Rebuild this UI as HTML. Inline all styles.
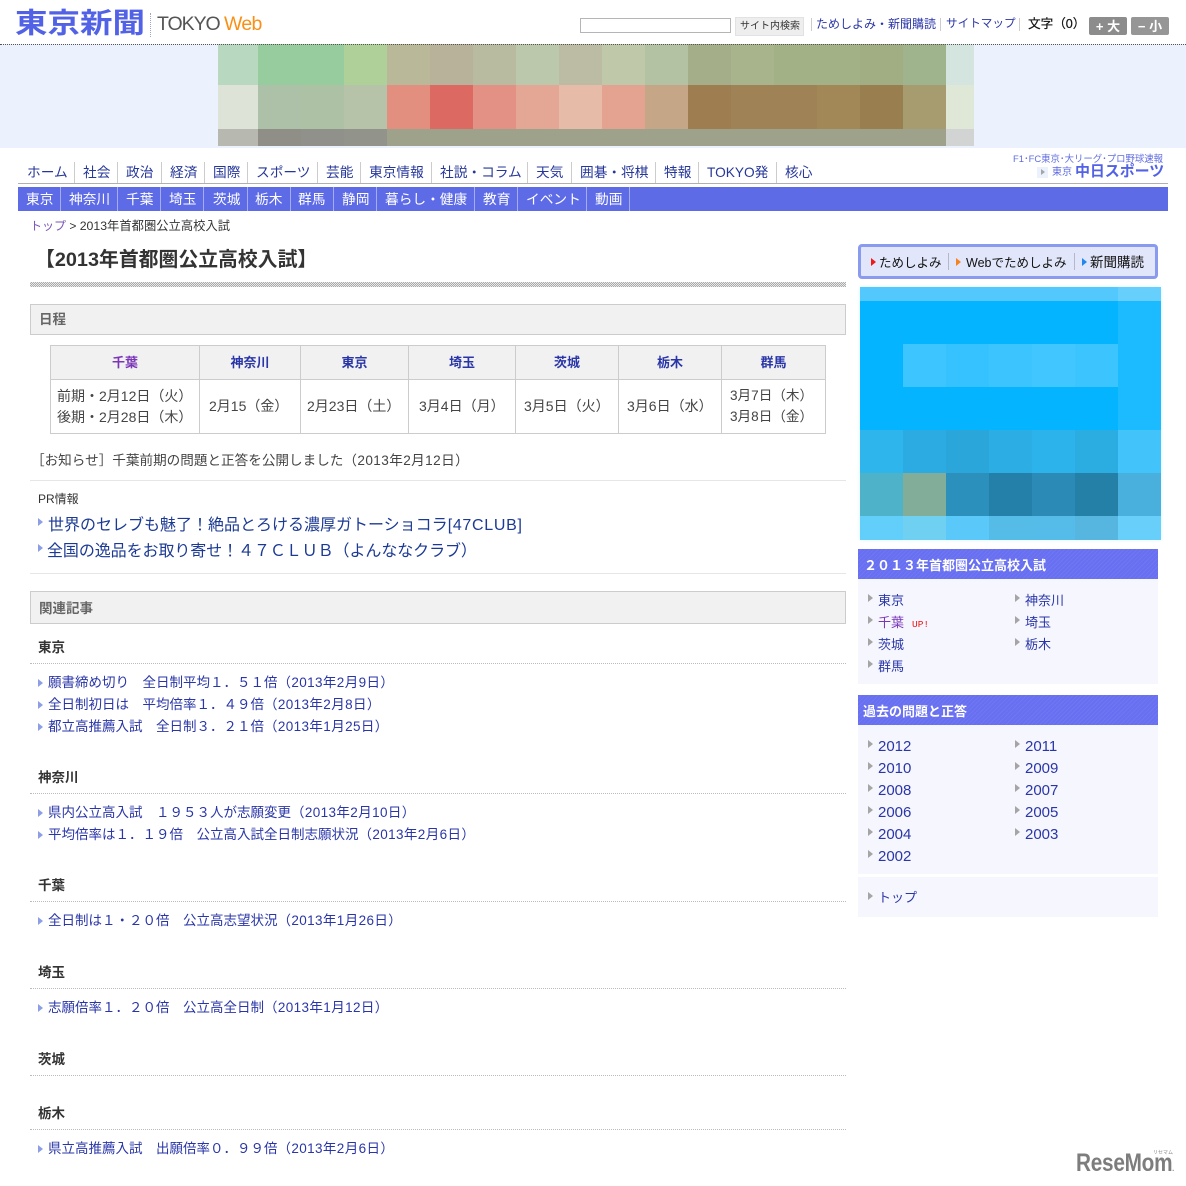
<!DOCTYPE html>
<html lang="ja"><head><meta charset="utf-8"><title>2013年首都圏公立高校入試</title>
<style>
html,body{margin:0;padding:0;background:#fff}
body{position:relative;width:1186px;height:1186px;overflow:hidden;font-family:"Liberation Sans","Noto Sans CJK JP",sans-serif;color:#333}
.t{position:absolute;white-space:nowrap;line-height:20px;height:20px}
.b{position:absolute}
.n{font-size:13.7px;color:#26379a}
.s{font-size:13.7px;color:#fff}
.v{position:absolute;width:1px;background:#ccc}
.vw{position:absolute;width:1px;background:#a5acf2;top:187px;height:24px}
.m{font-size:13.5px;color:#2a36a8}
.q{letter-spacing:.38px}
.h{font-size:13.5px;font-weight:bold;color:#333}
.th{font-size:13px;font-weight:bold;color:#2a36a8;text-align:center}
.c{font-size:14px;color:#444}
.a{position:absolute;width:0;height:0;border-left:5px solid #8c9fe6;border-top:4.5px solid transparent;border-bottom:4.5px solid transparent}
.g{position:absolute;width:0;height:0;border-left:5px solid #a5a5a5;border-top:4.5px solid transparent;border-bottom:4.5px solid transparent}
.d{position:absolute;left:30px;width:816px;height:0;border-top:1px dotted #bbb}
.sd{font-size:13px;color:#2a36a8}
.y{font-size:15px;color:#2a36a8}
.sh{position:absolute;left:858px;width:300px;height:30px;background:#686ff0;background-image:repeating-linear-gradient(135deg,#686ff0 0,#686ff0 2px,#7077f2 2px,#7077f2 3px)}
.sb{position:absolute;left:858px;width:300px;background:#f5f6fe}
.box{position:absolute;left:30px;width:814px;background:#f1f1f1;border:1px solid #ccc}
.l{position:absolute;background:#ccc}
</style></head><body>

<div class="t" style="left:15px;top:4px;font-size:32.5px;line-height:38px;height:38px;font-weight:bold;color:#5262e6;transform:scaleY(.86);transform-origin:0 50%">東京新聞</div>
<div class="b" style="left:150px;top:13px;height:24px;border-left:1px dotted #9aa6c8"></div>
<div class="t" style="left:157px;top:14px;font-size:19.5px;color:#555;letter-spacing:-1.05px">TOKYO <span style="color:#f98f14;letter-spacing:-.7px">Web</span></div>

<div class="b" style="left:580px;top:18px;width:149px;height:13px;border:1px solid #b5b5b5;background:#fff"></div>
<div class="b" style="left:735px;top:17px;width:67px;height:17px;background:#eee;border:1px solid #e2e2e2"></div>
<div class="t" style="left:740px;top:17px;font-size:10px;color:#333">サイト内検索</div>
<div class="v" style="left:811px;top:18px;height:13px"></div>
<div class="t" style="left:816px;top:14px;font-size:12px;color:#2a36a8">ためしよみ・新聞購読</div>
<div class="v" style="left:940px;top:18px;height:13px"></div>
<div class="t" style="left:946px;top:14px;font-size:11.6px;color:#2a36a8">サイトマップ</div>
<div class="v" style="left:1019px;top:18px;height:13px"></div>
<div class="t" style="left:1028px;top:14px;font-size:12.6px;color:#111;-webkit-text-stroke:.2px #111">文字（0）</div>
<div class="b" style="left:1089px;top:17px;width:38px;height:18px;background:#8c8c8c;border-radius:2px;color:#fff;font-size:13px;font-weight:bold;line-height:19px;text-align:center">+ 大</div>
<div class="b" style="left:1131px;top:17px;width:38px;height:18px;background:#969696;border-radius:2px;color:#fff;font-size:13px;font-weight:bold;line-height:19px;text-align:center">− 小</div>

<div class="b" style="left:0;top:44px;width:1186px;height:104px;background:#ecf1fe"></div>
<div class="b" style="left:0;top:44px;width:1186px;height:0;border-top:1px dotted #555;z-index:3"></div>
<svg class="b" style="left:218px;top:44px" width="756" height="102" shape-rendering="crispEdges">
<g>
<rect x="0" y="0" width="40" height="41" fill="#b8d9c0"/><rect x="40" y="0" width="43" height="41" fill="#96cc9e"/><rect x="83" y="0" width="43" height="41" fill="#96cc9e"/><rect x="126" y="0" width="43" height="41" fill="#afd098"/><rect x="169" y="0" width="43" height="41" fill="#b9b898"/><rect x="212" y="0" width="43" height="41" fill="#b9b29a"/><rect x="255" y="0" width="43" height="41" fill="#b8bba0"/><rect x="298" y="0" width="43" height="41" fill="#bbc8ac"/><rect x="341" y="0" width="43" height="41" fill="#bcbca4"/><rect x="384" y="0" width="43" height="41" fill="#bfc8a9"/><rect x="427" y="0" width="43" height="41" fill="#b2c2a2"/><rect x="470" y="0" width="43" height="41" fill="#a4ae88"/><rect x="513" y="0" width="43" height="41" fill="#a7b48c"/><rect x="556" y="0" width="43" height="41" fill="#a3b187"/><rect x="599" y="0" width="43" height="41" fill="#a3b187"/><rect x="642" y="0" width="43" height="41" fill="#a1ad82"/><rect x="685" y="0" width="43" height="41" fill="#9fb48c"/><rect x="728" y="0" width="28" height="41" fill="#d4e4de"/>
</g>
<g>
<rect x="0" y="41" width="40" height="44" fill="#dde3d6"/><rect x="40" y="41" width="43" height="44" fill="#adc1a9"/><rect x="83" y="41" width="43" height="44" fill="#adc1a5"/><rect x="126" y="41" width="43" height="44" fill="#b6c3a8"/><rect x="169" y="41" width="43" height="44" fill="#e28f80"/><rect x="212" y="41" width="43" height="44" fill="#dc6a62"/><rect x="255" y="41" width="43" height="44" fill="#e39184"/><rect x="298" y="41" width="43" height="44" fill="#e4a695"/><rect x="341" y="41" width="43" height="44" fill="#e6bca9"/><rect x="384" y="41" width="43" height="44" fill="#e4a390"/><rect x="427" y="41" width="43" height="44" fill="#c5a687"/><rect x="470" y="41" width="43" height="44" fill="#9e7d50"/><rect x="513" y="41" width="43" height="44" fill="#9f8255"/><rect x="556" y="41" width="43" height="44" fill="#9f8255"/><rect x="599" y="41" width="43" height="44" fill="#a28757"/><rect x="642" y="41" width="43" height="44" fill="#997f50"/><rect x="685" y="41" width="43" height="44" fill="#a79b70"/><rect x="728" y="41" width="28" height="44" fill="#dfe7d6"/>
</g>
<g>
<rect x="0" y="85" width="40" height="17" fill="#b7b9b0"/><rect x="40" y="85" width="43" height="17" fill="#8f8f88"/><rect x="83" y="85" width="43" height="17" fill="#90918a"/><rect x="126" y="85" width="43" height="17" fill="#92938a"/><rect x="169" y="85" width="559" height="17" fill="#9fa28b"/><rect x="728" y="85" width="28" height="17" fill="#d2d3d3"/>
</g>
</svg>

<div class="t n" style="left:27px;top:163px">ホーム</div>
<div class="v" style="left:74px;top:162px;height:21px"></div>
<div class="t n" style="left:83px;top:163px">社会</div>
<div class="v" style="left:117px;top:162px;height:21px"></div>
<div class="t n" style="left:126px;top:163px">政治</div>
<div class="v" style="left:161px;top:162px;height:21px"></div>
<div class="t n" style="left:170px;top:163px">経済</div>
<div class="v" style="left:204px;top:162px;height:21px"></div>
<div class="t n" style="left:213px;top:163px">国際</div>
<div class="v" style="left:247px;top:162px;height:21px"></div>
<div class="t n" style="left:256px;top:163px">スポーツ</div>
<div class="v" style="left:317px;top:162px;height:21px"></div>
<div class="t n" style="left:326px;top:163px">芸能</div>
<div class="v" style="left:360px;top:162px;height:21px"></div>
<div class="t n" style="left:369px;top:163px">東京情報</div>
<div class="v" style="left:431px;top:162px;height:21px"></div>
<div class="t n" style="left:440px;top:163px">社説・コラム</div>
<div class="v" style="left:527px;top:162px;height:21px"></div>
<div class="t n" style="left:536px;top:163px">天気</div>
<div class="v" style="left:571px;top:162px;height:21px"></div>
<div class="t n" style="left:580px;top:163px">囲碁・将棋</div>
<div class="v" style="left:655px;top:162px;height:21px"></div>
<div class="t n" style="left:664px;top:163px">特報</div>
<div class="v" style="left:698px;top:162px;height:21px"></div>
<div class="t n" style="left:707px;top:163px">TOKYO発</div>
<div class="v" style="left:776px;top:162px;height:21px"></div>
<div class="t n" style="left:785px;top:163px">核心</div>

<div class="t" style="left:1013px;top:149px;font-size:9.4px;color:#5f6ce0">F1･FC東京･大リーグ･プロ野球速報</div>
<div class="b" style="left:1037px;top:167px;width:11px;height:11px;background:#ecf1fe"></div>
<div class="g" style="left:1041px;top:169px;border-left-width:4px;border-top-width:3.5px;border-bottom-width:3.5px"></div>
<div class="t" style="left:1052px;top:163px;font-size:10px;color:#5f6ce0">東京</div>
<div class="t" style="left:1075px;top:162px;font-size:15px;font-weight:bold;color:#5262e6;letter-spacing:-.1px">中日スポーツ</div>

<div class="b" style="left:18px;top:183px;width:1150px;height:1px;background:#b0b0b0"></div>
<div class="b" style="left:18px;top:187px;width:1150px;height:24px;background:#5e6be6"></div>
<div class="t s" style="left:26px;top:190px">東京</div><div class="vw" style="left:60px"></div>
<div class="t s" style="left:69px;top:190px">神奈川</div><div class="vw" style="left:117px"></div>
<div class="t s" style="left:126px;top:190px">千葉</div><div class="vw" style="left:160px"></div>
<div class="t s" style="left:169px;top:190px">埼玉</div><div class="vw" style="left:203px"></div>
<div class="t s" style="left:213px;top:190px">茨城</div><div class="vw" style="left:247px"></div>
<div class="t s" style="left:255px;top:190px">栃木</div><div class="vw" style="left:290px"></div>
<div class="t s" style="left:298px;top:190px">群馬</div><div class="vw" style="left:333px"></div>
<div class="t s" style="left:342px;top:190px">静岡</div><div class="vw" style="left:376px"></div>
<div class="t s" style="left:385px;top:190px">暮らし・健康</div><div class="vw" style="left:474px"></div>
<div class="t s" style="left:483px;top:190px">教育</div><div class="vw" style="left:517px"></div>
<div class="t s" style="left:526px;top:190px">イベント</div><div class="vw" style="left:586px"></div>
<div class="t s" style="left:595px;top:190px">動画</div><div class="vw" style="left:629px"></div>

<div class="t" style="left:30px;top:216px;font-size:12px;color:#333"><span style="color:#7a55b8">トップ</span> &gt; <span style="font-size:12.3px">2013年首都圏公立高校入試</span></div>

<div class="t" style="left:35px;top:250px;font-size:19.85px;font-weight:bold;color:#333">【2013年首都圏公立高校入試】</div>
<div class="b" style="left:30px;top:282px;width:816px;height:5px;background:repeating-conic-gradient(#aaa 0 25%,#e8e8e8 0 50%) 0 0/2px 2px"></div>

<div class="box" style="top:304px;height:29px"></div>
<div class="t" style="left:39px;top:310px;font-size:13.5px;font-weight:bold;color:#666">日程</div>

<div class="b" style="left:51px;top:346px;width:774px;height:33px;background:#f1f1f1"></div>
<div class="l" style="left:50px;top:345px;width:776px;height:1px"></div>
<div class="l" style="left:50px;top:379px;width:776px;height:1px"></div>
<div class="l" style="left:50px;top:433px;width:776px;height:1px"></div>
<div class="l" style="left:50px;top:345px;width:1px;height:89px"></div>
<div class="l" style="left:199px;top:345px;width:1px;height:89px"></div>
<div class="l" style="left:300px;top:345px;width:1px;height:89px"></div>
<div class="l" style="left:408px;top:345px;width:1px;height:89px"></div>
<div class="l" style="left:515px;top:345px;width:1px;height:89px"></div>
<div class="l" style="left:618px;top:345px;width:1px;height:89px"></div>
<div class="l" style="left:721px;top:345px;width:1px;height:89px"></div>
<div class="l" style="left:825px;top:345px;width:1px;height:89px"></div>
<div class="t th" style="left:51px;width:148px;top:353px;color:#7a35b8">千葉</div>
<div class="t th" style="left:200px;width:100px;top:353px">神奈川</div>
<div class="t th" style="left:301px;width:107px;top:353px">東京</div>
<div class="t th" style="left:409px;width:106px;top:353px">埼玉</div>
<div class="t th" style="left:516px;width:102px;top:353px">茨城</div>
<div class="t th" style="left:619px;width:102px;top:353px">栃木</div>
<div class="t th" style="left:722px;width:103px;top:353px">群馬</div>
<div class="t c" style="left:57px;top:386px">前期・2月12日（火）</div>
<div class="t c" style="left:57px;top:407px">後期・2月28日（木）</div>
<div class="t c" style="left:209px;top:396px">2月15（金）</div>
<div class="t c" style="left:307px;top:396px">2月23日（土）</div>
<div class="t c" style="left:419px;top:396px">3月4日（月）</div>
<div class="t c" style="left:524px;top:396px">3月5日（火）</div>
<div class="t c" style="left:627px;top:396px">3月6日（水）</div>
<div class="t c" style="left:730px;top:386px;font-size:13.6px">3月7日（木）</div>
<div class="t c" style="left:730px;top:407px;font-size:13.6px">3月8日（金）</div>

<div class="t" style="left:31px;top:451px;font-size:13.6px;color:#444">［お知らせ］千葉前期の問題と正答を公開しました<span style="letter-spacing:.4px">（2013年2月12日）</span></div>
<div class="l" style="left:30px;top:480px;width:816px;height:1px;background:#e6e6e6"></div>
<div class="t" style="left:38px;top:489px;font-size:12px;color:#333">PR情報</div>
<div class="a" style="left:38px;top:518px"></div>
<div class="t" style="left:48px;top:516px;font-size:16px;color:#1c3a94">世界のセレブも魅了！絶品とろける濃厚ガトーショコラ<span style="letter-spacing:.7px">[47CLUB]</span></div>
<div class="a" style="left:38px;top:544px"></div>
<div class="t" style="left:47px;top:542px;font-size:16px;color:#1c3a94;letter-spacing:-.08px">全国の逸品をお取り寄せ！４７ＣＬＵＢ（よんななクラブ）</div>
<div class="l" style="left:30px;top:573px;width:816px;height:1px;background:#e6e6e6"></div>

<div class="box" style="top:591px;height:31px"></div>
<div class="t" style="left:39px;top:599px;font-size:13.5px;font-weight:bold;color:#666">関連記事</div>

<div class="t h" style="left:38px;top:638px">東京</div>
<div class="d" style="top:663px"></div>
<div class="a" style="left:38px;top:679px"></div><div class="t m" style="left:48px;top:673px">願書締め切り　全日制平均１．５１倍<span class="q">（2013年2月9日）</span></div>
<div class="a" style="left:38px;top:701px"></div><div class="t m" style="left:48px;top:695px">全日制初日は　平均倍率１．４９倍<span class="q">（2013年2月8日）</span></div>
<div class="a" style="left:38px;top:723px"></div><div class="t m" style="left:48px;top:717px">都立高推薦入試　全日制３．２１倍<span class="q">（2013年1月25日）</span></div>

<div class="t h" style="left:38px;top:768px">神奈川</div>
<div class="d" style="top:793px"></div>
<div class="a" style="left:38px;top:809px"></div><div class="t m" style="left:48px;top:803px">県内公立高入試　１９５３人が志願変更<span class="q">（2013年2月10日）</span></div>
<div class="a" style="left:38px;top:831px"></div><div class="t m" style="left:48px;top:825px">平均倍率は１．１９倍　公立高入試全日制志願状況<span class="q">（2013年2月6日）</span></div>

<div class="t h" style="left:38px;top:876px">千葉</div>
<div class="d" style="top:901px"></div>
<div class="a" style="left:38px;top:917px"></div><div class="t m" style="left:48px;top:911px">全日制は１・２０倍　公立高志望状況<span class="q">（2013年1月26日）</span></div>

<div class="t h" style="left:38px;top:963px">埼玉</div>
<div class="d" style="top:988px"></div>
<div class="a" style="left:38px;top:1004px"></div><div class="t m" style="left:48px;top:998px">志願倍率１．２０倍　公立高全日制<span class="q">（2013年1月12日）</span></div>

<div class="t h" style="left:38px;top:1050px">茨城</div>
<div class="d" style="top:1075px"></div>

<div class="t h" style="left:38px;top:1104px">栃木</div>
<div class="d" style="top:1129px"></div>
<div class="a" style="left:38px;top:1145px"></div><div class="t m" style="left:48px;top:1139px">県立高推薦入試　出願倍率０．９９倍<span class="q">（2013年2月6日）</span></div>

<div class="b" style="left:858px;top:244px;width:294px;height:29px;border:3px solid #8a9bef;border-radius:4px;background:#e2e6fa"></div>
<div class="b" style="left:871px;top:258px;width:0;height:0;border-left:5px solid #f01818;border-top:4px solid transparent;border-bottom:4px solid transparent"></div>
<div class="t" style="left:879px;top:253px;font-size:12.5px;color:#111">ためしよみ</div>
<div class="b" style="left:948px;top:253px;width:1px;height:17px;background:#b5b8c8"></div>
<div class="b" style="left:956px;top:258px;width:0;height:0;border-left:5px solid #f58320;border-top:4px solid transparent;border-bottom:4px solid transparent"></div>
<div class="t" style="left:966px;top:253px;font-size:12.5px;color:#111">Webでためしよみ</div>
<div class="b" style="left:1074px;top:253px;width:1px;height:17px;background:#b5b8c8"></div>
<div class="b" style="left:1082px;top:258px;width:0;height:0;border-left:5px solid #2088f0;border-top:4px solid transparent;border-bottom:4px solid transparent"></div>
<div class="t" style="left:1090px;top:253px;font-size:13.5px;color:#111">新聞購読</div>

<svg class="b" style="left:860px;top:287px;box-shadow:0 0 4px #d8f3ff" width="301" height="253" shape-rendering="crispEdges">
<rect x="0" y="0" width="258" height="14" fill="#53c8fc"/><rect x="258" y="0" width="43" height="14" fill="#66cffc"/>
<rect x="0" y="14" width="258" height="43" fill="#05b4fe"/><rect x="258" y="14" width="43" height="43" fill="#1cbbff"/>
<rect x="0" y="57" width="43" height="43" fill="#05b4fe"/><rect x="43" y="57" width="43" height="43" fill="#3dc5ff"/><rect x="86" y="57" width="43" height="43" fill="#35c2fe"/><rect x="129" y="57" width="43" height="43" fill="#3cc4ff"/><rect x="172" y="57" width="43" height="43" fill="#42c6ff"/><rect x="215" y="57" width="43" height="43" fill="#3cc4ff"/><rect x="258" y="57" width="43" height="43" fill="#1cbbff"/>
<rect x="0" y="100" width="258" height="43" fill="#05b4fe"/><rect x="258" y="100" width="43" height="43" fill="#1cbbff"/>
<rect x="0" y="143" width="43" height="43" fill="#2db5ec"/><rect x="43" y="143" width="43" height="43" fill="#2babe2"/><rect x="86" y="143" width="43" height="43" fill="#2aa6da"/><rect x="129" y="143" width="43" height="43" fill="#2caee5"/><rect x="172" y="143" width="43" height="43" fill="#2db3eb"/><rect x="215" y="143" width="43" height="43" fill="#2bade2"/><rect x="258" y="143" width="43" height="43" fill="#42c4fb"/>
<rect x="0" y="186" width="43" height="43" fill="#4eb2c8"/><rect x="43" y="186" width="43" height="43" fill="#82ae99"/><rect x="86" y="186" width="43" height="43" fill="#2c90bc"/><rect x="129" y="186" width="43" height="43" fill="#2580a9"/><rect x="172" y="186" width="43" height="43" fill="#2c8bb6"/><rect x="215" y="186" width="43" height="43" fill="#2580a8"/><rect x="258" y="186" width="43" height="43" fill="#49b0dd"/>
<rect x="0" y="229" width="43" height="24" fill="#62cefa"/><rect x="43" y="229" width="43" height="24" fill="#70d0f2"/><rect x="86" y="229" width="43" height="24" fill="#5ac8f8"/><rect x="129" y="229" width="43" height="24" fill="#55bce8"/><rect x="172" y="229" width="43" height="24" fill="#55bbe8"/><rect x="215" y="229" width="43" height="24" fill="#56b6e0"/><rect x="258" y="229" width="43" height="24" fill="#68cefa"/>
</svg>

<div class="sb" style="top:579px;height:105px"></div>
<div class="sh" style="top:549px"></div>
<div class="t" style="left:864px;top:556px;font-size:13px;font-weight:bold;color:#fff">２０１３年首都圏公立高校入試</div>
<div class="g" style="left:868px;top:594px"></div><div class="t sd" style="left:878px;top:591px">東京</div>
<div class="g" style="left:1015px;top:594px"></div><div class="t sd" style="left:1025px;top:591px">神奈川</div>
<div class="g" style="left:868px;top:616px"></div><div class="t sd" style="left:878px;top:613px;color:#7a35b8">千葉</div>
<div class="t" style="left:912px;top:615px;font-size:9.5px;color:#ee1111;font-family:'Liberation Mono',monospace">UP!</div>
<div class="g" style="left:1015px;top:616px"></div><div class="t sd" style="left:1025px;top:613px">埼玉</div>
<div class="g" style="left:868px;top:638px"></div><div class="t sd" style="left:878px;top:635px">茨城</div>
<div class="g" style="left:1015px;top:638px"></div><div class="t sd" style="left:1025px;top:635px">栃木</div>
<div class="g" style="left:868px;top:660px"></div><div class="t sd" style="left:878px;top:657px">群馬</div>

<div class="sb" style="top:725px;height:149px"></div>
<div class="sh" style="top:695px"></div>
<div class="t" style="left:863px;top:702px;font-size:13px;font-weight:bold;color:#fff">過去の問題と正答</div>
<div class="g" style="left:868px;top:740px"></div><div class="t y" style="left:878px;top:737px">2012</div>
<div class="g" style="left:1015px;top:740px"></div><div class="t y" style="left:1025px;top:737px">2011</div>
<div class="g" style="left:868px;top:762px"></div><div class="t y" style="left:878px;top:759px">2010</div>
<div class="g" style="left:1015px;top:762px"></div><div class="t y" style="left:1025px;top:759px">2009</div>
<div class="g" style="left:868px;top:784px"></div><div class="t y" style="left:878px;top:781px">2008</div>
<div class="g" style="left:1015px;top:784px"></div><div class="t y" style="left:1025px;top:781px">2007</div>
<div class="g" style="left:868px;top:806px"></div><div class="t y" style="left:878px;top:803px">2006</div>
<div class="g" style="left:1015px;top:806px"></div><div class="t y" style="left:1025px;top:803px">2005</div>
<div class="g" style="left:868px;top:828px"></div><div class="t y" style="left:878px;top:825px">2004</div>
<div class="g" style="left:1015px;top:828px"></div><div class="t y" style="left:1025px;top:825px">2003</div>
<div class="g" style="left:868px;top:850px"></div><div class="t y" style="left:878px;top:847px">2002</div>

<div class="sb" style="top:877px;height:40px"></div>
<div class="g" style="left:868px;top:892px"></div><div class="t sd" style="left:878px;top:888px">トップ</div>

<div class="t" style="left:1076px;top:1150px;font-size:25px;line-height:26px;height:26px;font-weight:bold;color:#7d7d7d;transform:scaleX(.83);transform-origin:0 50%;letter-spacing:-.3px">ReseMom<span style="font-size:8px;letter-spacing:0">.</span></div>
<div class="t" style="left:1153px;top:1143px;font-size:5px;color:#888">リセマム</div>

</body></html>
